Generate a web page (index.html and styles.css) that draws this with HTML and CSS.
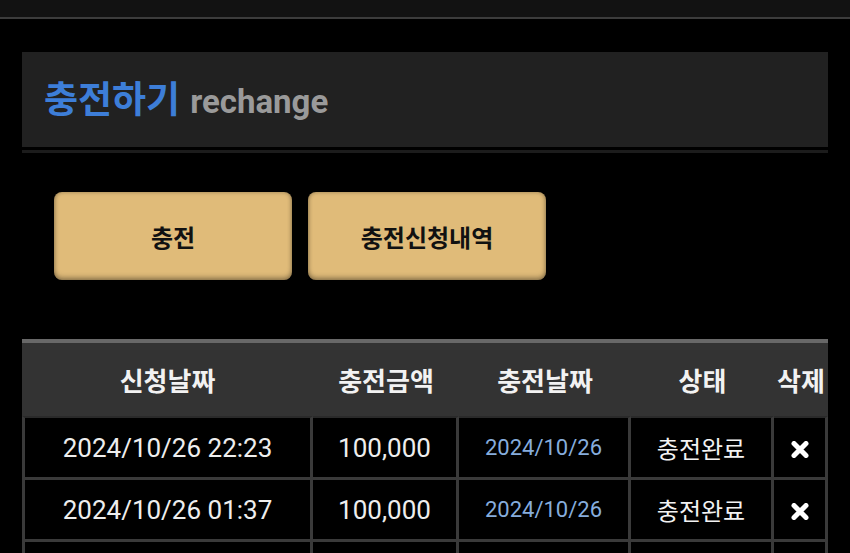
FILE: index.html
```html
<!DOCTYPE html>
<html lang="ko">

<head>
    <meta charset="UTF-8">
    <meta name="viewport" content="width=device-width, initial-scale=1.0">
    <title>충전하기</title>
    <link rel="stylesheet" href="styles.css">
</head>

<body>
    <div class="topbar"></div>

    <div id="wrap">
        <div class="page-title">
            <h2><span class="ko">충전하기</span> <span class="en">rechange</span></h2>
        </div>
        <div class="title-line"></div>

        <div class="tabs">
            <button class="tab">충전</button>
            <button class="tab">충전신청내역</button>
        </div>

        <table class="history">
            <thead>
                <tr>
                    <th class="c-req">신청날짜</th>
                    <th class="c-amt">충전금액</th>
                    <th class="c-date">충전날짜</th>
                    <th class="c-state">상태</th>
                    <th class="c-del">삭제</th>
                </tr>
            </thead>
            <tbody>
                <tr>
                    <td class="big">2024/10/26 22:23</td>
                    <td class="big">100,000</td>
                    <td class="done-date">2024/10/26</td>
                    <td class="state">충전완료</td>
                    <td><span class="del"><svg width="18" height="17" viewBox="0 0 18 17"><path d="M3 2.5L15 14.5M15 2.5L3 14.5" stroke="#fff" stroke-width="5" stroke-linecap="round" /></svg></span></td>
                </tr>
                <tr>
                    <td class="big">2024/10/26 01:37</td>
                    <td class="big">100,000</td>
                    <td class="done-date">2024/10/26</td>
                    <td class="state">충전완료</td>
                    <td><span class="del"><svg width="18" height="17" viewBox="0 0 18 17"><path d="M3 2.5L15 14.5M15 2.5L3 14.5" stroke="#fff" stroke-width="5" stroke-linecap="round" /></svg></span></td>
                </tr>
                <tr class="empty">
                    <td></td>
                    <td></td>
                    <td></td>
                    <td></td>
                    <td></td>
                </tr>
            </tbody>
        </table>
    </div>
</body>

</html>
```

FILE: styles.css
```css
body {
    font-family: Roboto, "Noto Sans CJK KR", sans-serif;
    background-color: #000;
    color: #eee;
    margin: 0;
    padding: 0;
    overflow: hidden;
}

.topbar {
    height: 17px;
    background-color: #121212;
    border-bottom: 2px solid #3c3c3c;
}

#wrap {
    margin: 33px 22px 0;
}

.page-title {
    height: 95px;
    background-color: #212121;
    display: flex;
    align-items: center;
    padding-left: 22px;
}

.page-title h2 {
    margin: 0;
    padding-top: 2px;
    font-weight: bold;
    line-height: 1;
}

.page-title .ko {
    color: #3d7ed8;
    font-size: 37px;
}

.page-title .en {
    color: #9a9a9a;
    font-size: 33px;
    margin-left: 4px;
}

.title-line {
    margin-top: 3px;
    height: 3px;
    background-color: #1c1c1c;
}

.tabs {
    display: flex;
    gap: 16px;
    padding: 39px 0 0 32px;
}

.tab {
    width: 238px;
    height: 88px;
    background-color: #e0bb79;
    color: #111;
    font-family: "Noto Sans CJK KR", sans-serif;
    font-size: 24px;
    font-weight: bold;
    border: none;
    border-radius: 8px;
    box-shadow: inset 0 -3px 5px rgba(0, 0, 0, 0.25), inset 0 0 4px rgba(0, 0, 0, 0.3);
    cursor: pointer;
}

.history {
    margin-top: 59px;
    width: 806px;
    table-layout: fixed;
    border-collapse: separate;
    border-spacing: 0;
}

.history th,
.history td {
    box-sizing: border-box;
    text-align: center;
    padding: 0;
}

.history th {
    height: 77px;
    background-color: #333;
    border-top: 4px solid #686868;
    color: #f2f2f2;
    font-size: 26px;
    font-weight: bold;
}

.c-req { width: 291px; }
.c-amt { width: 146px; }
.c-date { width: 172px; }
.c-state { width: 143px; }
.c-del { width: 54px; }

.history td {
    height: 62px;
    background-color: #000;
    border-right: 3px solid #3a3a3a;
    border-bottom: 3px solid #3a3a3a;
    font-size: 22px;
}

.history td:first-child {
    border-left: 3px solid #3a3a3a;
}

.history tbody tr:first-child td {
    height: 64px;
    border-top: 2px solid #2a2a2a;
}

.history td.big {
    font-size: 26px;
}

.done-date {
    color: #86addd;
}

.history td.state {
    color: #f2f2f2;
    font-size: 24px;
}

.del {
    display: inline-flex;
    vertical-align: middle;
}
```
